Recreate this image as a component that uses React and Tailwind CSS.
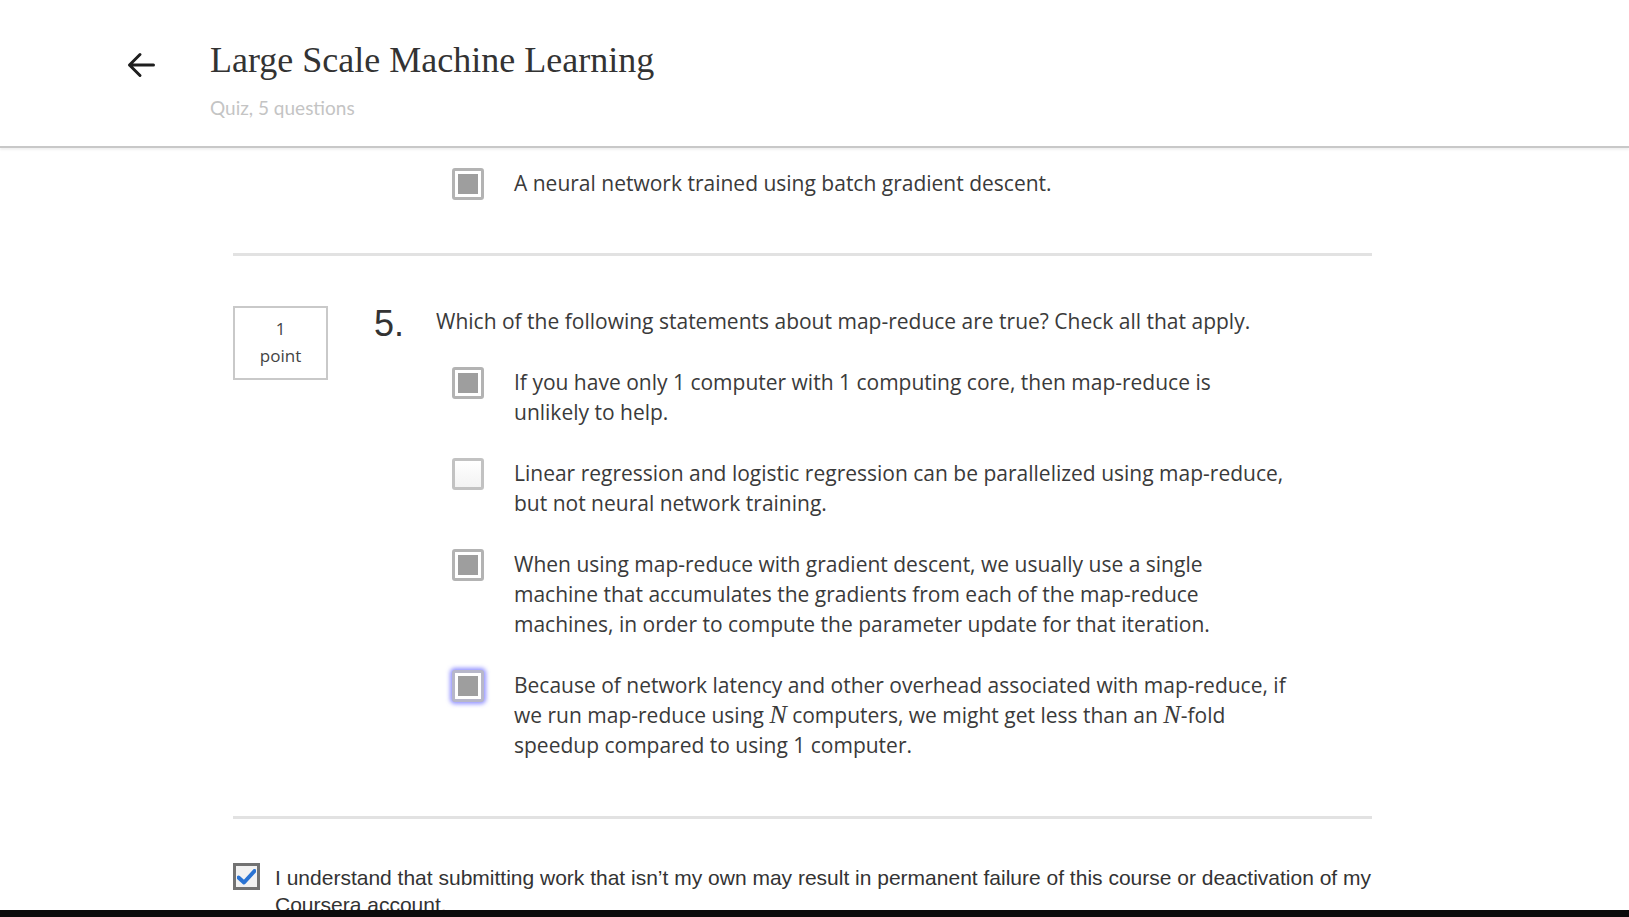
import React from 'react';

const bodyFont = "font-['Open_Sans',sans-serif]";

function Box({ state }) {
  if (state === 'empty') {
    return (
      <div className="w-[32px] h-[32px] shrink-0 rounded-[3px] border-[3px] border-[#c2c2c2] bg-gradient-to-b from-white to-[#f3f3f3]" />
    );
  }
  return (
    <div
      className={`w-[32px] h-[32px] shrink-0 rounded-[3px] border-[3px] p-[3px] bg-white ${
        state === 'focus'
          ? 'border-[#b7b7c9] shadow-[0_0_4px_2px_rgba(110,110,255,0.75)]'
          : 'border-[#b3b3b3]'
      }`}
    >
      <div className="w-full h-full bg-[#9e9e9e]" />
    </div>
  );
}

function N() {
  return <span className="font-['Liberation_Serif',serif] italic text-[26px] leading-none">N</span>;
}

function Option({ state, children }) {
  return (
    <div className="flex items-start gap-[30px]">
      <Box state={state} />
      <p className={`${bodyFont} text-[21px] leading-[30px] text-[#3a3a3a] whitespace-nowrap`}>{children}</p>
    </div>
  );
}

export default function App() {
  return (
    <div className="relative h-screen overflow-hidden bg-white">
      {/* header */}
      <header className="h-[148px] flex border-b-2 border-[#c8c8c8] shadow-[0_2px_2px_rgba(0,0,0,0.06)]">
        <div className="pl-[127px] pt-[52px]">
          <svg width="28" height="26" viewBox="0 0 28 26" fill="none" stroke="#1e1e1e" strokeWidth="3" strokeLinecap="round" strokeLinejoin="round">
            <path d="M26.5 13H2.5M13 2.5L2.5 13L13 23.5" />
          </svg>
        </div>
        <div className="ml-[55px] pt-[42px]">
          <h1 className="font-['Liberation_Serif',serif] text-[36px] leading-[36px] text-[#333]">
            Large Scale Machine Learning
          </h1>
          <p className="mt-[18px] font-['Lato',sans-serif] text-[19px] leading-[24px] text-[#c4c4c4]">
            Quiz, 5 questions
          </p>
        </div>
      </header>

      <main className="ml-[233px] w-[1139px] pt-[20px]">
        <div className="pl-[219px]">
          <Option state="checked">A neural network trained using batch gradient descent.</Option>
        </div>

        <div className="mt-[53px] h-[3px] bg-[#e2e2e2]" />

        {/* question 5 */}
        <div className="mt-[50px] flex items-start">
          <div className={`w-[95px] h-[74px] pb-[3px] border-2 border-[#c9c9c9] flex flex-col items-center justify-center ${bodyFont} text-[17px] leading-[27px] text-[#444]`}>
            <span>1</span>
            <span>point</span>
          </div>
          <div className="ml-[46px] w-[62px] font-['Liberation_Sans',sans-serif] text-[36px] leading-[36px] text-[#333]">5.</div>
          <div>
            <p className={`${bodyFont} text-[21px] leading-[30px] text-[#3a3a3a]`}>
              Which of the following statements about map-reduce are true? Check all that apply.
            </p>
            <div className="ml-[16px] mt-[31px] flex flex-col gap-[31px]">
              <Option state="checked">
                If you have only 1 computer with 1 computing core, then map-reduce is
                <br />
                unlikely to help.
              </Option>
              <Option state="empty">
                Linear regression and logistic regression can be parallelized using map-reduce,
                <br />
                but not neural network training.
              </Option>
              <Option state="checked">
                When using map-reduce with gradient descent, we usually use a single
                <br />
                machine that accumulates the gradients from each of the map-reduce
                <br />
                machines, in order to compute the parameter update for that iteration.
              </Option>
              <Option state="focus">
                Because of network latency and other overhead associated with map-reduce, if
                <br />
                we run map-reduce using <N /> computers, we might get less than an <N />-fold
                <br />
                speedup compared to using 1 computer.
              </Option>
            </div>
          </div>
        </div>

        <div className="mt-[56px] h-[3px] bg-[#e2e2e2]" />

        {/* honor code */}
        <div className="mt-[44px] flex items-start gap-[15px]">
          <div className="w-[27px] h-[27px] shrink-0 border-[3px] border-[#727272] bg-[#f2f2f2] flex items-center justify-center">
            <svg width="19" height="16" viewBox="0 0 19 16">
              <path d="M1.5 8.5L7 13.5L17.5 2" fill="none" stroke="#2a73d3" strokeWidth="4" strokeLinecap="round" strokeLinejoin="round" />
            </svg>
          </div>
          <p className="mt-[1px] font-['Liberation_Sans',sans-serif] text-[21px] leading-[27px] text-[#333] whitespace-nowrap">
            I understand that submitting work that isn’t my own may result in permanent failure of this course or deactivation of my
            <br />
            Coursera account.
          </p>
        </div>
      </main>

      <div className="absolute bottom-0 left-0 w-full h-[7px] bg-[#0b0b0b]" />
    </div>
  );
}
